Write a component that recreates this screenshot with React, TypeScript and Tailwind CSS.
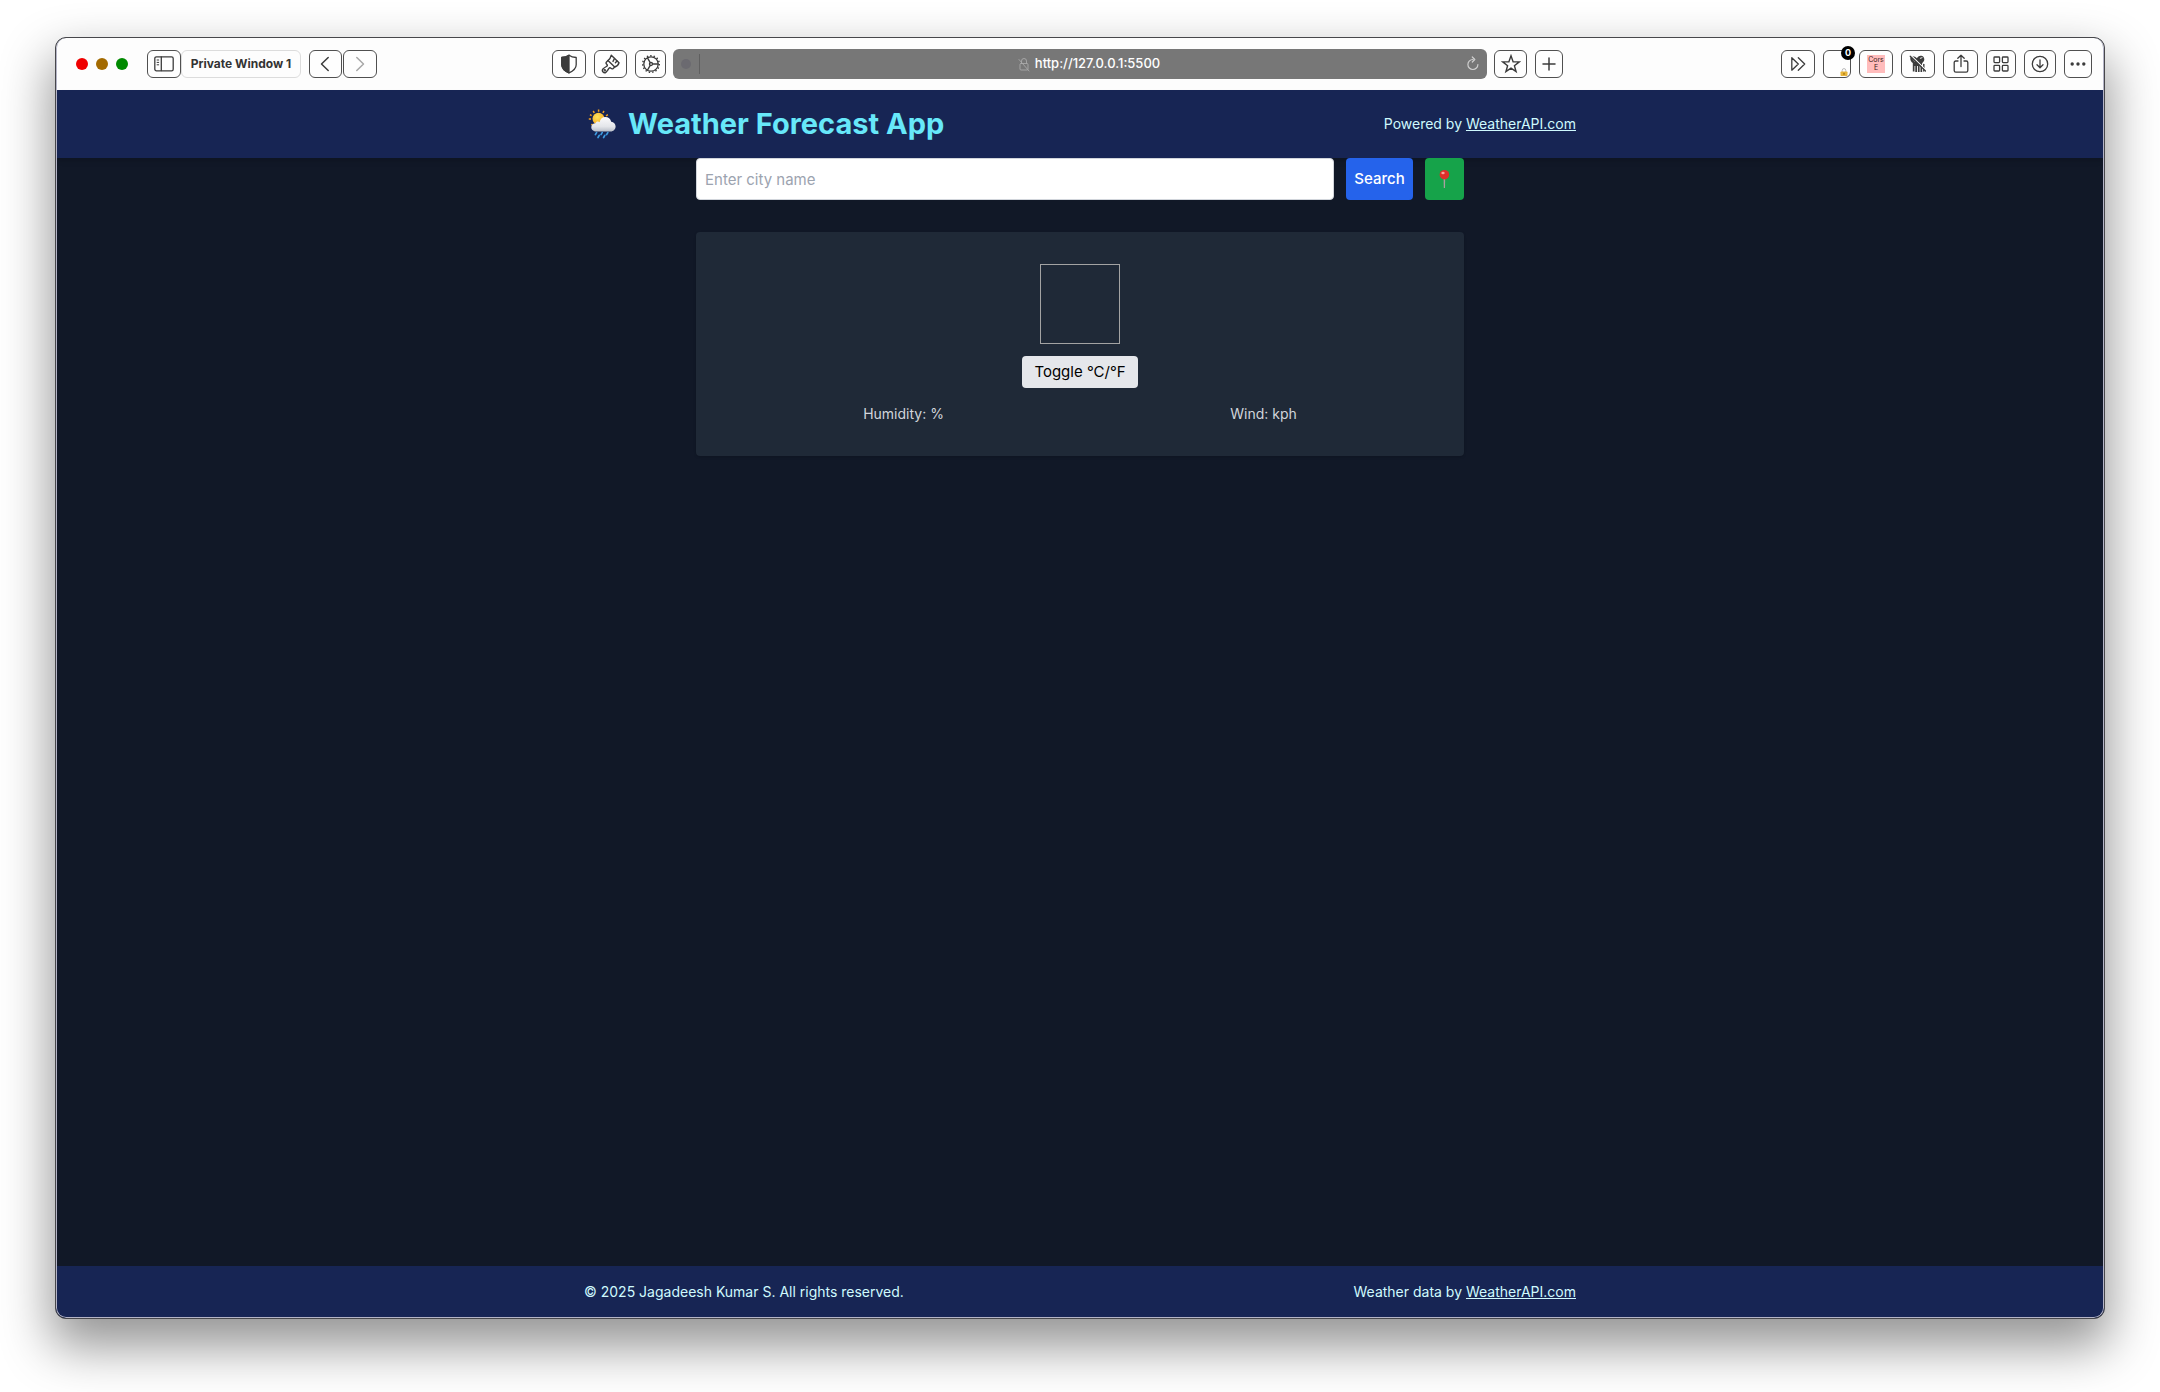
import React from "react";

type IconProps = { w: number; h: number; children: React.ReactNode; sw?: number };

function Icon({ w, h, children, sw = 1.3 }: IconProps) {
  return (
    <svg
      width={w}
      height={h}
      viewBox={`0 0 ${w} ${h}`}
      fill="none"
      stroke="currentColor"
      strokeWidth={sw}
      strokeLinecap="round"
      strokeLinejoin="round"
      aria-hidden="true"
    >
      {children}
    </svg>
  );
}

function ToolButton({
  label,
  width,
  muted,
  children,
}: {
  label: string;
  width: string;
  muted?: boolean;
  children: React.ReactNode;
}) {
  return (
    <button
      type="button"
      aria-label={label}
      className={`relative flex h-7 shrink-0 items-center justify-center rounded-[6px] border border-[#505050] bg-[#fefefe] ${
        muted ? "text-[#a8a8a8]" : "text-[#3c3c3c]"
      } ${width}`}
    >
      {children}
    </button>
  );
}

function SidebarIcon() {
  return (
    <Icon w={20} h={16}>
      <rect x="0.8" y="0.8" width="18.4" height="14" rx="1.6" />
      <path d="M7.3 1v13.6" />
      <path d="M3.1 4h1.6M3.1 6.4h1.6M3.1 8.8h1.6" strokeWidth="1" />
    </Icon>
  );
}

function ShieldIcon() {
  return (
    <Icon w={18} h={20}>
      <path d="M9 1.2C11 2.6 13.6 3.3 16.2 3.5v7.2c0 4-3.4 6.4-7.2 8.1-3.8-1.7-7.2-4.1-7.2-8.1V3.5C4.4 3.3 7 2.6 9 1.2Z" />
      <path d="M9 1.2v17.6c-3.8-1.7-7.2-4.1-7.2-8.1V3.5C4.4 3.3 7 2.6 9 1.2Z" fill="currentColor" />
    </Icon>
  );
}

function BrushIcon() {
  return (
    <Icon w={20} h={20} sw={1.4}>
      <path d="M10.3 1.2 18 8.7c-.6 2.1-2 3.6-4.3 4.3L7 6.6c1.6-1.2 2.7-2.9 3.3-5.4Z" />
      <path d="M7 6.6 5.5 8c-.8.8-.5 1.6.2 2.2 1.1 1 .7 1.7-.3 2.3-1.4.8-2.6 1.500-3.4 2.500-1.8 2.3.9 4.900 3.100 3.100 1-.9 1.800-2.100 2.600-3.500.6-1 1.400-1.300 2.300-.3.7.7 1.500.8 2.200.1L13.700 13" />
      <path d="M13.5 4.5 12 7.400M16 7l-1.600 1.800" />
      <circle cx="3.8" cy="16.3" r="0.5" />
    </Icon>
  );
}

function GearIcon() {
  return (
    <Icon w={20} h={20}>
      <circle cx="10" cy="10" r="7.2" />
      <circle cx="10" cy="10" r="8.3" strokeWidth="1.5" strokeDasharray="1.4 2.06" strokeLinecap="butt" />
      <circle cx="10" cy="10" r="1.5" />
      <path d="M11.6 10h5.4M9.2 8.6 6.500 3.900M9.200 11.400l-2.700 4.700" />
    </Icon>
  );
}

function LockOffIcon() {
  return (
    <Icon w={12} h={15} sw={0.9}>
      <rect x="2" y="6.5" width="8" height="6.5" rx="1" />
      <path d="M3.5 6.5V4a2.5 2.5 0 0 1 5 0v2.5M1 2.5l10 11.5" />
    </Icon>
  );
}

function PadlockIcon() {
  return (
    <svg width="8" height="8" viewBox="0 0 8 8" aria-hidden="true">
      <path d="M2.2 4V2.4a1.8 1.8 0 0 1 3.6 0V4" fill="none" stroke="#b9b9b9" strokeWidth="1" />
      <rect x="0.5" y="3.5" width="7" height="4.5" rx="0.8" fill="#e9b63a" />
      <rect x="3.3" y="4.8" width="1.4" height="2" fill="#a87816" />
    </svg>
  );
}

function MaskIcon() {
  return (
    <Icon w={20} h={20} sw={1.2}>
      <path
        d="M2.500 3.300C3.500 2 5.500 1.800 7 2.800l2 1.500c.8-2.300 3.300-3.300 5.300-2.200 2.400 1.300 2.700 4.700.7 6.200-.6.5-1 .9-1 1.700l.200 8h-1.700v-6h-.9v6h-1.700v-6h-.9v6H7.300v-6h-.8v5.500H4.800V9C3 8.300 1.800 5.300 2.500 3.300Z"
        fill="currentColor"
        stroke="none"
      />
      <path d="M15.800 10.500V17" strokeWidth="1.4" />
      <path d="M4.500 4.500 7 7.500M12.300 4.300l1.700-.6" stroke="#fefefe" strokeWidth="0.9" />
      <path d="m3.300 1.800 15 14.600" stroke="#fefefe" strokeWidth="1.2" />
      <path d="m2.200 2.200 15.300 14.800" />
    </Icon>
  );
}

function WeatherIcon() {
  return (
    <svg width="32" height="32" viewBox="0 0 32 32" className="shrink-0" aria-hidden="true">
      <defs>
        <radialGradient id="sun" cx="0.4" cy="0.35" r="0.7">
          <stop offset="0" stopColor="#ffe45c" />
          <stop offset="1" stopColor="#f9a81c" />
        </radialGradient>
        <linearGradient id="cloud" x1="0" y1="0" x2="0" y2="1">
          <stop offset="0" stopColor="#fbfbfc" />
          <stop offset="0.65" stopColor="#e4e6ea" />
          <stop offset="1" stopColor="#b9bfc9" />
        </linearGradient>
      </defs>
      <path
        d="M10.600 1.500v2.200M5.200 3l1.100 1.900M16 3l-1.100 1.900M2 6.700l1.600 1M19.900 6.700 18 7.800M.8 11H3M3.300 17l1.200-1"
        stroke="#f3a01f"
        strokeWidth="1.5"
      />
      <circle cx="10.500" cy="10.700" r="6" fill="url(#sun)" />
      <path
        d="M8.500 23.500c-3 0-5.200-1.800-5.200-4.300 0-2.400 2-4 4.200-4 .3-.9 1.200-1.600 2.300-1.600.7 0 1.300.2 1.800.6C12.200 10.900 14.500 9 17.200 9c3.200 0 5.400 2 6 4.700 2.500.3 4.400 2.300 4.400 4.800 0 2.800-2.200 5-5 5Z"
        fill="url(#cloud)"
      />
      <path
        d="m8.600 24.600-1.200 2M14.200 24.600l-1.200 2M19.800 24.600l-1.200 2M11.200 27.300 10 29.500M16.800 27.300l-1.200 2.200"
        stroke="#3d9be0"
        strokeWidth="1.7"
        strokeLinecap="round"
      />
    </svg>
  );
}

function PinIcon() {
  return (
    <svg width="23" height="20" viewBox="0 0 23 20" aria-hidden="true">
      <path d="M10.600 8h1.600l-.2 11h-1.200Z" fill="#a9a0a0" />
      <circle cx="11.4" cy="5.7" r="4.8" fill="#dd2e2a" />
      <ellipse cx="10" cy="4" rx="1.7" ry="1.300" fill="#f7a39c" />
    </svg>
  );
}

function Toolbar() {
  return (
    <div className="flex h-[52px] shrink-0 items-center bg-[#fdfdfd] pl-5 pr-3">
      <div className="flex items-center gap-2">
        <button type="button" aria-label="Close" className="size-3 rounded-full bg-[#ef0000]" />
        <button type="button" aria-label="Minimize" className="size-3 rounded-full bg-[#a36a00]" />
        <button type="button" aria-label="Zoom" className="size-3 rounded-full bg-[#008a00]" />
      </div>
      <div className="ml-[19px] flex items-center">
        <ToolButton label="Show sidebar" width="w-[34px]">
          <SidebarIcon />
        </ToolButton>
        <button
          type="button"
          className="h-7 w-[120px] shrink-0 whitespace-nowrap rounded-[6px] border border-[#dcdcdc] text-[12px] font-bold text-[#333333]"
        >
          Private Window 1
        </button>
      </div>
      <div className="ml-2 flex items-center gap-px">
        <ToolButton label="Back" width="w-[33px]">
          <Icon w={12} h={16} sw={1.5}>
            <path d="M8.2 1.500 1.500 8l6.700 6.500" />
          </Icon>
        </ToolButton>
        <ToolButton label="Forward" width="w-[34px]" muted>
          <Icon w={10} h={16} sw={1.5}>
            <path d="M1.8 1.500 8.500 8l-6.700 6.500" />
          </Icon>
        </ToolButton>
      </div>
      <div className="grow-[175] basis-0" />
      <div className="flex items-center gap-2">
        <ToolButton label="Privacy report" width="w-[34px]">
          <ShieldIcon />
        </ToolButton>
        <ToolButton label="Appearance" width="w-[33px]">
          <BrushIcon />
        </ToolButton>
        <ToolButton label="Settings" width="w-[31px]">
          <GearIcon />
        </ToolButton>
      </div>
      <div className="mx-[7px] flex h-[30px] grow-[798] basis-0 items-center rounded-[6px] bg-[#777777] px-2 text-white">
        <span className="size-[10px] rounded-full bg-[#6b6a70]" />
        <span className="ml-2 h-5 w-px bg-[#5f5f5f]" />
        <div className="flex flex-1 items-center justify-center gap-[5px] pl-3">
          <span className="text-[#a9a9a9]">
            <LockOffIcon />
          </span>
          <span className="text-[13px] font-medium">http://127.0.0.1:5500</span>
        </div>
        <button type="button" aria-label="Reload" className="text-[#d0d0d0]">
          <Icon w={13} h={16} sw={1.2}>
            <path d="M7 3.500a5 5 0 1 0 4.900 5M6.300 1l2.500 2.500L6.300 6" />
          </Icon>
        </button>
      </div>
      <div className="flex items-center gap-2">
        <ToolButton label="Bookmark" width="w-[33px]">
          <Icon w={20} h={20} sw={1.4}>
            <path
              strokeLinejoin="miter"
              d="M10 1.800 12.100 7.700l6.200.2-4.900 3.800 1.700 6-5.100-3.500-5.100 3.500 1.700-6-4.900-3.800 6.200-.2Z"
            />
          </Icon>
        </ToolButton>
        <ToolButton label="New tab" width="w-7">
          <Icon w={14} h={14} sw={1.5}>
            <path d="M7 1v12M1 7h12" />
          </Icon>
        </ToolButton>
      </div>
      <div className="grow-[218] basis-0" />
      <div className="flex items-center gap-2">
        <ToolButton label="More extensions" width="w-[34px]">
          <Icon w={16} h={16}>
            <path d="M1.800 1.800v12.400L8.300 8ZM8.300 1.800 14.700 8l-6.400 6.200" />
          </Icon>
        </ToolButton>
        <ToolButton label="Lock extension" width="w-7">
          <span className="absolute -right-[5px] -top-[5px] flex size-[14px] items-center justify-center rounded-full bg-black text-[9px] font-bold text-white">
            0
          </span>
          <span className="absolute bottom-px right-[2px]">
            <PadlockIcon />
          </span>
        </ToolButton>
        <ToolButton label="Cors E" width="w-[34px]">
          <span className="flex size-[18px] flex-col items-center justify-center bg-[#ffbcbc] text-[7px] leading-[8px] text-[#3a2020]">
            <span>Cors</span>
            <span>E</span>
          </span>
        </ToolButton>
        <ToolButton label="Tracker blocker" width="w-[34px]">
          <MaskIcon />
        </ToolButton>
        <ToolButton label="Share" width="w-[35px]">
          <Icon w={16} h={20}>
            <path d="M5 7H2.800C1.800 7 1.200 7.600 1.200 8.600v8c0 1 .6 1.600 1.600 1.600h10.400c1 0 1.600-.6 1.600-1.600v-8c0-1-.6-1.600-1.600-1.600H11M8 12.500V1.200M4.800 4.200 8 1.200l3.200 3" />
          </Icon>
        </ToolButton>
        <ToolButton label="Tab overview" width="w-[30px]">
          <Icon w={16} h={16}>
            <rect x="1" y="1" width="5.6" height="5.6" rx="0.8" />
            <rect x="9.4" y="1" width="5.6" height="5.6" rx="0.8" />
            <rect x="1" y="9.4" width="5.6" height="5.6" rx="0.8" />
            <rect x="9.4" y="9.4" width="5.6" height="5.6" rx="0.8" />
          </Icon>
        </ToolButton>
        <ToolButton label="Downloads" width="w-8">
          <Icon w={18} h={18}>
            <circle cx="9" cy="9" r="7.7" />
            <path d="M9 5v7.600M6 9.800l3 3 3-3" />
          </Icon>
        </ToolButton>
        <ToolButton label="More" width="w-7">
          <svg width="16" height="4" viewBox="0 0 16 4" fill="currentColor" aria-hidden="true">
            <circle cx="2.2" cy="2" r="1.7" />
            <circle cx="8" cy="2" r="1.7" />
            <circle cx="13.8" cy="2" r="1.7" />
          </svg>
        </ToolButton>
      </div>
    </div>
  );
}

function WeatherLink() {
  return (
    <a href="#weatherapi" className="underline">
      WeatherAPI.com
    </a>
  );
}

export default function App() {
  return (
    <div className="flex min-h-screen flex-col bg-white px-[55px] pb-[73px] pt-[37px] font-['Inter',sans-serif] antialiased">
      <div className="relative flex flex-1 flex-col overflow-hidden rounded-[11px] border border-[#47474b] bg-[#111827] shadow-[0_24px_50px_4px_rgba(0,0,0,0.42)]">
        <Toolbar />
        <header className="bg-[#172554] shadow-md">
          <div className="mx-auto flex max-w-5xl items-center justify-between p-4">
            <h1 className="flex items-center gap-2 whitespace-nowrap pl-1 text-[29px] font-bold leading-9 text-[#67e8f9]">
              <WeatherIcon />
              Weather Forecast App
            </h1>
            <p className="text-sm text-[#cffafe]">
              Powered by <WeatherLink />
            </p>
          </div>
        </header>
        <main className="mx-auto w-full max-w-3xl flex-1">
          <form className="flex gap-3" onSubmit={(e) => e.preventDefault()}>
            <input
              type="text"
              aria-label="City name"
              placeholder="Enter city name"
              className="h-[42px] min-w-0 flex-1 rounded border border-[#d1d5db] bg-white p-2 text-[15px] text-black placeholder:text-[#9ca3af]"
            />
            <button type="submit" className="w-[67px] rounded bg-[#2563eb] text-[15px] font-medium text-white">
              Search
            </button>
            <button type="button" aria-label="Use my location" className="rounded bg-[#16a34a] px-2 text-white">
              <PinIcon />
            </button>
          </form>
          <section className="mt-8 flex flex-col items-center rounded bg-[#1f2937] px-6 py-8 shadow">
            <div role="img" aria-label="Weather condition" className="size-20 border border-[#a3a3a3]" />
            <button type="button" className="mt-3 h-8 rounded bg-[#e5e7eb] px-3 text-[15px] text-black">
              Toggle °C/°F
            </button>
            <div className="mt-4 flex w-full justify-around text-sm text-[#d1d5db]">
              <p>Humidity: %</p>
              <p>Wind: kph</p>
            </div>
          </section>
        </main>
        <footer className="bg-[#172554] text-sm text-[#cffafe]">
          <div className="mx-auto flex max-w-5xl justify-between p-4">
            <p>© 2025 Jagadeesh Kumar S. All rights reserved.</p>
            <p>
              Weather data by <WeatherLink />
            </p>
          </div>
        </footer>
        <div className="pointer-events-none absolute inset-0 rounded-[10px] border border-t-0 border-[#b4b4c6]" />
      </div>
    </div>
  );
}
